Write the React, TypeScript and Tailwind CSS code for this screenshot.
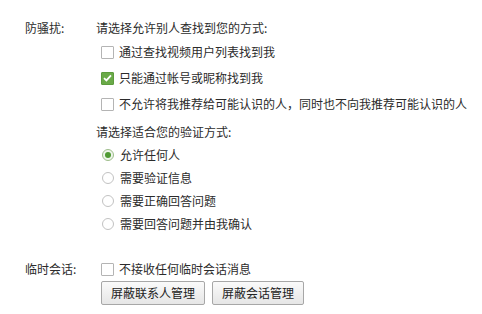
import React, { useState } from "react";

const font = { fontFamily: '"Noto Sans CJK SC", "Microsoft YaHei", sans-serif' };

function Checkbox({ checked, label, onChange }: { checked: boolean; label: string; onChange: () => void }) {
  return (
    <label onClick={onChange} className="flex items-center h-full cursor-pointer">
      <span
        className={
          checked
            ? "w-[13px] h-[13px] rounded-[1px] bg-[#6aaa48] border border-[#5d9c3e] flex items-center justify-center"
            : "w-[13px] h-[13px] rounded-[1px] bg-white border border-[#b4b4b4]"
        }
      >
        {checked && (
          <svg width="9" height="8" viewBox="0 0 9 8">
            <path d="M1 4.2 L3.4 6.4 L8 1.4" stroke="white" strokeWidth="1.8" fill="none" />
          </svg>
        )}
      </span>
      <span className="ml-[5px]">{label}</span>
    </label>
  );
}

function Radio({ checked, label, onChange }: { checked: boolean; label: string; onChange: () => void }) {
  return (
    <label onClick={onChange} className="flex items-center h-full cursor-pointer">
      <span
        className={
          checked
            ? "w-[12px] h-[12px] rounded-full border border-[#9ebd8c] bg-[#eef5ea] flex items-center justify-center"
            : "w-[12px] h-[12px] rounded-full border border-[#c2c2c2] bg-white"
        }
      >
        {checked && <span className="w-[6px] h-[6px] rounded-full bg-[#4f9a32]" />}
      </span>
      <span className="ml-[6px]">{label}</span>
    </label>
  );
}

const findOptions = ["通过查找视频用户列表找到我", "只能通过帐号或昵称找到我", "不允许将我推荐给可能认识的人，同时也不向我推荐可能认识的人"];
const verifyOptions = ["允许任何人", "需要验证信息", "需要正确回答问题", "需要回答问题并由我确认"];

export default function App() {
  const [finds, setFinds] = useState([false, true, false]);
  const [verify, setVerify] = useState(0);
  const [noTemp, setNoTemp] = useState(false);

  return (
    <div className="w-[482px] h-[314px] bg-white text-[12px] text-[#2b2b2b] pt-[17px] pl-[25px]" style={font}>
      {/* 防骚扰 */}
      <div className="flex">
        <div className="w-[71px] h-[22px] leading-[22px]">防骚扰:</div>
        <div className="flex flex-col">
          <div className="h-[22px] leading-[22px]">请选择允许别人查找到您的方式:</div>
          <div className="pl-[5px] flex flex-col">
            {findOptions.map((t, i) => (
              <div key={i} className="h-[26px]">
                <Checkbox
                  checked={finds[i]}
                  label={t}
                  onChange={() => setFinds((prev) => prev.map((v, j) => (j === i ? !v : v)))}
                />
              </div>
            ))}
          </div>
          <div className="mt-[4px] h-[22px] leading-[22px]">请选择适合您的验证方式:</div>
          <div className="pl-[6px] flex flex-col">
            {verifyOptions.map((t, i) => (
              <div key={i} className="h-[23px]">
                <Radio checked={verify === i} label={t} onChange={() => setVerify(i)} />
              </div>
            ))}
          </div>
        </div>
      </div>

      {/* 临时会话 */}
      <div className="flex mt-[23px]">
        <div className="w-[71px] h-[22px] leading-[22px]">临时会话:</div>
        <div className="flex flex-col pl-[5px]">
          <div className="h-[22px]">
            <Checkbox checked={noTemp} label="不接收任何临时会话消息" onChange={() => setNoTemp(!noTemp)} />
          </div>
          <div className="flex gap-[7px] mt-[1px]">
            <button className="h-[24px] px-[9px] border border-[#a7a7a7] rounded-[2px] bg-gradient-to-b from-[#fafafa] to-[#e6e6e6] text-[#222]">
              屏蔽联系人管理
            </button>
            <button className="h-[24px] px-[9px] border border-[#a7a7a7] rounded-[2px] bg-gradient-to-b from-[#fafafa] to-[#e6e6e6] text-[#222]">
              屏蔽会话管理
            </button>
          </div>
        </div>
      </div>
    </div>
  );
}
